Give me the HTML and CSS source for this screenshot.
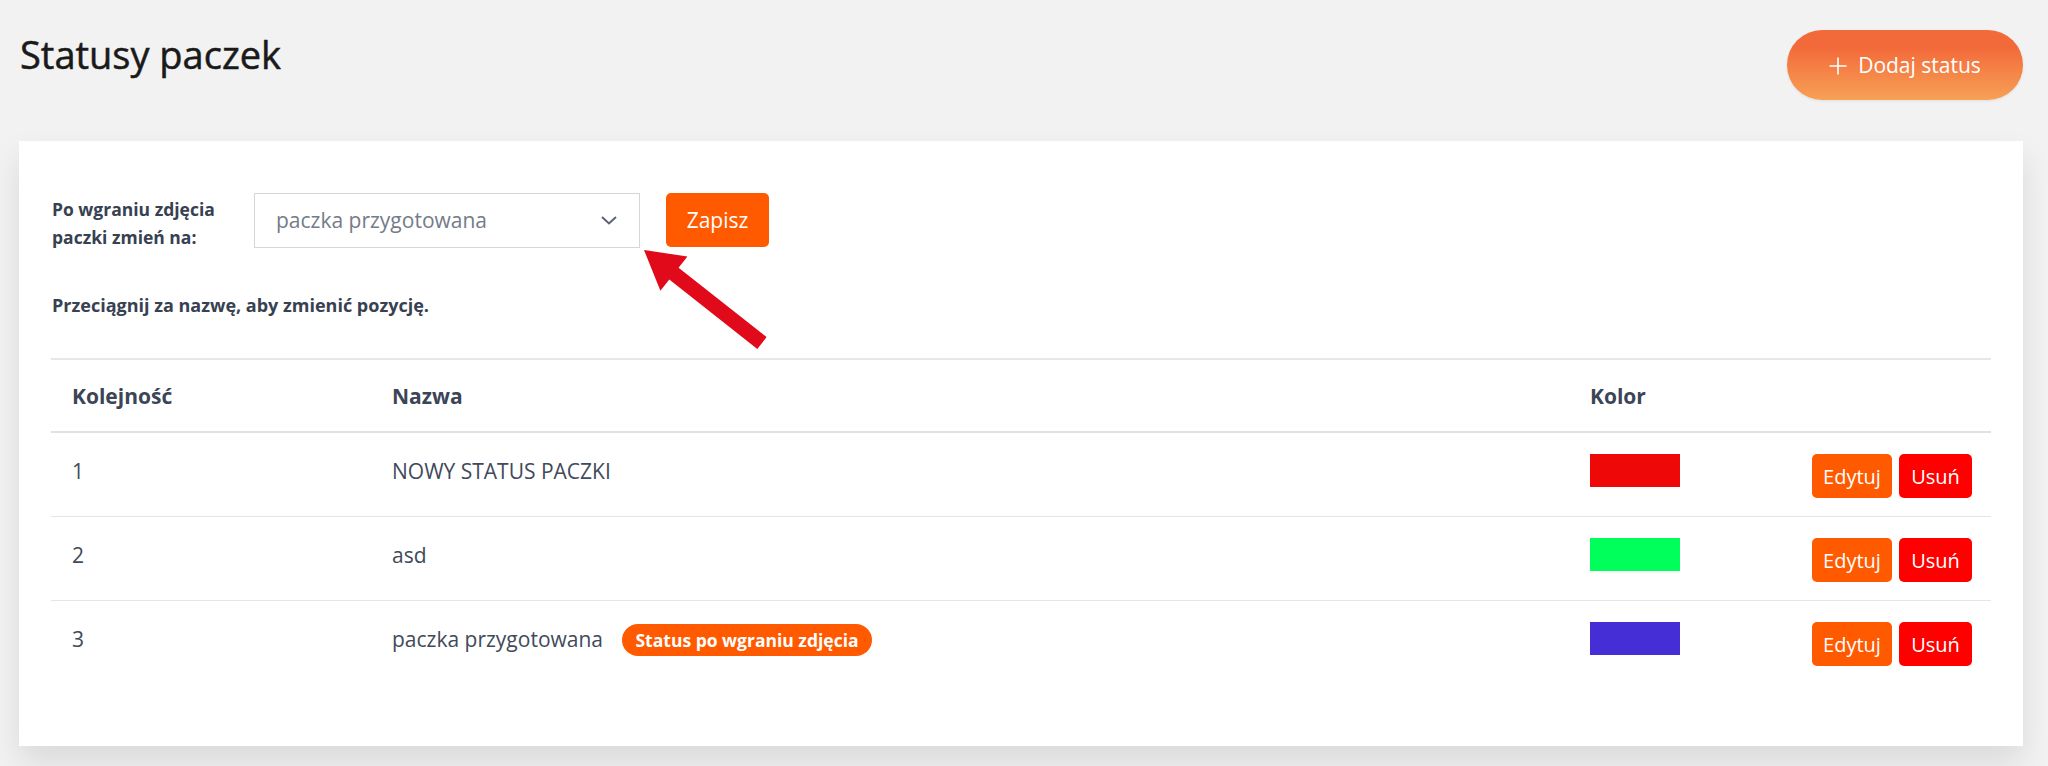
FILE: index.html
```html
<!DOCTYPE html>
<html lang="pl">
  <head>
    <meta charset="UTF-8" />
    <meta name="viewport" content="width=device-width, initial-scale=1.0" />
    <title>Statusy paczek</title>
    <link rel="stylesheet" href="styles.css">
  </head>
  <body>
    <header class="page-header">
      <h1 class="page-title">Statusy paczek</h1>
      <button class="add-button">
        <svg class="plus-icon" viewBox="0 0 18 18" width="18" height="18">
          <path d="M9 0.5v17M0.5 9h17" stroke="#fff" stroke-width="1.6" fill="none" />
        </svg>
        <span>Dodaj status</span>
      </button>
    </header>

    <main class="card">
      <div class="upload-row">
        <label class="upload-label" for="uploadStatus">Po wgraniu zdjęcia<br />paczki zmień na:</label>
        <div class="select-box" id="uploadStatus">
          <span>paczka przygotowana</span>
          <svg class="chevron" viewBox="0 0 16 9" width="16" height="9">
            <path d="M1 1l7 6.5L15 1" stroke="#5b6472" stroke-width="2" fill="none" />
          </svg>
        </div>
        <button class="save-button">Zapisz</button>
      </div>

      <svg class="pointer-arrow" viewBox="0 0 132 108" width="132" height="108">
        <polygon points="5,5 48.4,11.5 39.6,22.7 127.6,92.1 118.3,103.9 30.3,34.5 21.4,45.7" fill="#e00a1b" />
      </svg>

      <p class="hint">Przeciągnij za nazwę, aby zmienić pozycję.</p>

      <table class="status-table">
        <thead>
          <tr>
            <th class="col-order">Kolejność</th>
            <th class="col-name">Nazwa</th>
            <th class="col-color">Kolor</th>
            <th class="col-actions"></th>
          </tr>
        </thead>
        <tbody>
          <tr>
            <td>1</td>
            <td>NOWY STATUS PACZKI</td>
            <td><div class="swatch" style="background: #ee0808"></div></td>
            <td class="actions">
              <button class="btn btn-edit">Edytuj</button>
              <button class="btn btn-delete">Usuń</button>
            </td>
          </tr>
          <tr>
            <td>2</td>
            <td>asd</td>
            <td><div class="swatch" style="background: #00ff5a"></div></td>
            <td class="actions">
              <button class="btn btn-edit">Edytuj</button>
              <button class="btn btn-delete">Usuń</button>
            </td>
          </tr>
          <tr>
            <td>3</td>
            <td>paczka przygotowana <span class="badge">Status po wgraniu zdjęcia</span></td>
            <td><div class="swatch" style="background: #452ed6"></div></td>
            <td class="actions">
              <button class="btn btn-edit">Edytuj</button>
              <button class="btn btn-delete">Usuń</button>
            </td>
          </tr>
        </tbody>
      </table>
    </main>
  </body>
</html>
```

FILE: styles.css
```css
* {
  box-sizing: border-box;
  margin: 0;
  padding: 0;
}

body {
  background-color: #f2f2f2;
  font-family: "Open Sans", Arial, sans-serif;
  color: #3b4556;
  padding: 0 25px 0 19px;
  min-height: 100vh;
}

button {
  font-family: inherit;
  border: none;
  cursor: pointer;
}

.page-header {
  display: flex;
  justify-content: space-between;
  align-items: flex-start;
  padding-top: 30px;
  margin-bottom: 41px;
}

.page-title {
  font-size: 38px;
  font-weight: 400;
  line-height: 46px;
  color: #1a1a1a;
  -webkit-text-stroke: 0.5px #1a1a1a;
  margin-top: 1px;
  margin-left: 1px;
}

.add-button {
  display: flex;
  align-items: center;
  justify-content: center;
  gap: 11px;
  width: 236px;
  height: 70px;
  border-radius: 35px;
  background: linear-gradient(to bottom, #f36a3a 25%, #f7a156);
  color: #fff;
  font-size: 21px;
  box-shadow: 0 1px 3px rgba(0, 0, 0, 0.08);
}

.plus-icon {
  margin-top: 1px;
}

.card {
  position: relative;
  background: #fff;
  padding: 51px 32px 62px;
  box-shadow: 0 16px 30px rgba(0, 0, 0, 0.1);
}

.upload-row {
  display: flex;
  align-items: center;
}

.upload-label {
  width: 203px;
  padding-left: 1px;
  font-size: 17.5px;
  font-weight: 700;
  line-height: 28px;
  color: #374151;
  margin: 3px 0 -3px;
}

.select-box {
  display: flex;
  align-items: center;
  justify-content: space-between;
  width: 386px;
  height: 55px;
  padding: 0 22px 0 21px;
  border: 1px solid #d4d6da;
  font-size: 21px;
  color: #737c88;
}

.save-button {
  margin-left: 26px;
  width: 103px;
  height: 54px;
  border-radius: 5px;
  background: #ff5a00;
  color: #fff;
  font-size: 21px;
}

.pointer-arrow {
  position: absolute;
  left: 620px;
  top: 104px;
}

.hint {
  margin-top: 45px;
  padding-left: 1px;
  font-size: 18px;
  font-weight: 700;
  line-height: 24px;
  color: #374151;
}

.status-table {
  width: 100%;
  margin-top: 41px;
  border-collapse: collapse;
  border-top: 2px solid #e5e7eb;
}

.status-table th {
  height: 73px;
  text-align: left;
  font-size: 21px;
  font-weight: 700;
  color: #3b4556;
  padding: 0 21px;
  border-bottom: 2px solid #dee2e6;
}

.col-order {
  width: 320px;
}

.col-color {
  width: 200px;
}

.col-actions {
  width: 222px;
}

.status-table td {
  vertical-align: top;
  padding: 21px 21px 18px;
  font-size: 21px;
  line-height: 34px;
  color: #3f4a5a;
  border-bottom: 1px solid #e2e5e9;
}

.status-table tbody tr:last-child td {
  border-bottom: none;
}

.swatch {
  width: 90px;
  height: 33px;
}

.status-table td.actions {
  text-align: right;
  padding-right: 19px;
  white-space: nowrap;
  font-size: 0;
  line-height: 0;
}

.btn {
  display: inline-block;
  vertical-align: top;
  height: 44px;
  padding: 0 10px;
  border-radius: 5px;
  color: #fff;
  font-size: 20px;
}

.btn-edit {
  background: #ff5a00;
  width: 80px;
}

.btn-delete {
  background: #ff0000;
  width: 73px;
  margin-left: 7px;
}

.badge {
  display: inline-block;
  vertical-align: middle;
  margin-left: 14px;
  margin-top: -3px;
  height: 32px;
  line-height: 32px;
  padding: 0 13px;
  border-radius: 16px;
  background: #ff5a00;
  color: #fff;
  font-size: 17.5px;
  font-weight: 700;
}
```
